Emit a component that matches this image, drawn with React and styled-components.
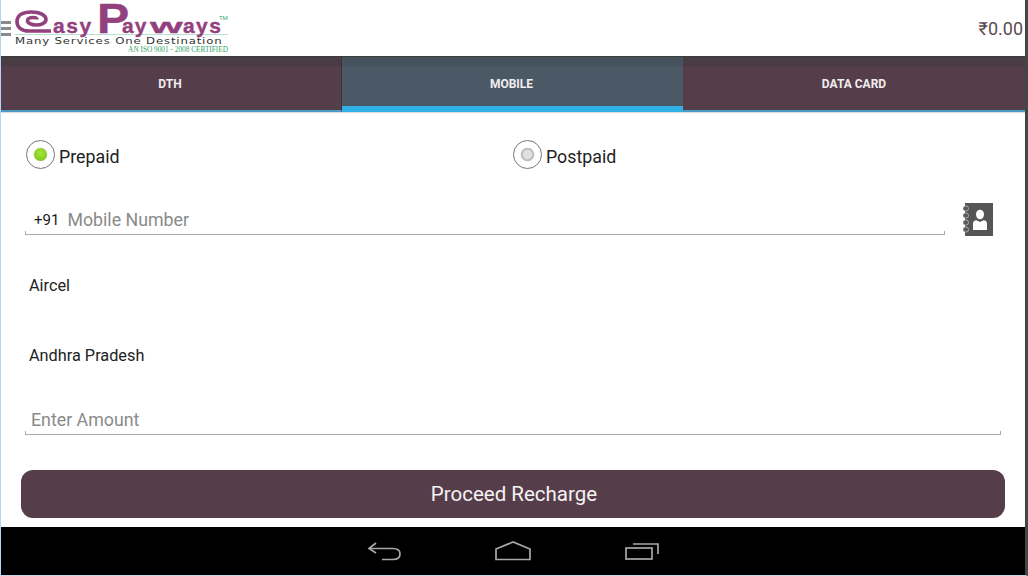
import React from "react";
import styled, { createGlobalStyle } from "styled-components";

const Global = createGlobalStyle`
  html, body { margin: 0; padding: 0; background: #fff; }
  body { font-family: Roboto, "Liberation Sans", sans-serif; }
`;

const Screen = styled.div`
  width: 1028px;
  height: 576px;
  box-sizing: border-box;
  display: flex;
  flex-direction: column;
  overflow: hidden;
  background: #fff;
  border-left: 1px solid #b5d5f3;
  border-right: 3px solid #454545;
  border-bottom: 1px solid #c4d8ea;
`;

const Header = styled.header`
  height: 56px;
  flex: none;
  display: flex;
  align-items: flex-start;
  justify-content: space-between;
  background: #fff;
`;

const Brand = styled.div`
  display: flex;
  align-items: flex-start;
`;

const Burger = styled.div`
  width: 10px;
  margin-top: 21px;
  display: flex;
  flex-direction: column;
  gap: 3px;
  flex: none;
  margin-right: 4px;
`;

const BurgerLine = styled.span`
  display: block;
  height: 3px;
  background: #8a8a8a;
`;

const Logo = styled.div`
  width: 213px;
  height: 56px;
  display: flex;
  flex-direction: column;
  flex: none;
`;

const LogoFrame = styled.div`
  position: relative;
`;

const LogoMark = styled.div`
  height: 34px;
  display: flex;
  align-items: baseline;
  color: #93407f;
  font-family: "Liberation Sans", sans-serif;
  font-weight: 700;
  white-space: nowrap;
  -webkit-text-stroke: 0.35px #93407f;
`;

const SwirlSlot = styled.div`
  align-self: flex-start;
  margin-top: 10px;
  width: 38px;
  height: 23px;
  flex: none;
`;

const LogoLetters = styled.span`
  display: inline-block;
  width: ${(p) => p.$width}px;
  flex: none;
  font-size: 21px;
  line-height: 12px;
  letter-spacing: ${(p) => p.$spacing || 0}px;
  transform: scaleX(${(p) => p.$stretch || 1});
  transform-origin: left center;
`;

const LogoBig = styled.span`
  display: inline-block;
  width: 33px;
  flex: none;
  margin-left: 4px;
  margin-right: -8px;
  margin-top: 2px;
  font-size: 42px;
  line-height: 34px;
  transform: scaleX(1.15);
  transform-origin: left center;
`;

const Trademark = styled.span`
  position: absolute;
  top: 15px;
  left: 204px;
  font-size: 6px;
  line-height: 6px;
  font-weight: 400;
  color: #3aa876;
`;

const Tagline = styled.div`
  border-top: 1px solid #b7e2cf;
  height: 11px;
  padding-top: 3px;
  box-sizing: border-box;
  display: flex;
  align-items: center;
`;

const TaglineText = styled.span`
  display: block;
  font-family: "DejaVu Sans", sans-serif;
  font-size: 8px;
  line-height: 8px;
  letter-spacing: 0.55px;
  color: #333;
  white-space: nowrap;
  transform: scaleX(1.47);
  transform-origin: left center;
`;

const Certified = styled.div`
  margin-top: 1px;
  text-align: right;
  font-family: "Liberation Serif", serif;
  font-size: 7.3px;
  line-height: 8px;
  color: #2fa468;
  white-space: nowrap;
`;

const Balance = styled.div`
  margin: 19px 2px 0 0;
  font-size: 18px;
  line-height: 20px;
  color: #5a4a52;
`;

const Tabs = styled.nav`
  height: 56px;
  flex: none;
  display: grid;
  grid-template-columns: 341px 341px 1fr;
  box-shadow: 0 1px 1px #ddd;
`;

const Tab = styled.div`
  display: flex;
  align-items: center;
  justify-content: center;
  padding: ${(p) => (p.$active ? "4px 2px 0 0" : p.$last ? "0" : "0 2px 0 0")};
  box-sizing: border-box;
  font-size: 12px;
  font-weight: 700;
  color: #f2eef0;
  background: ${(p) =>
    p.$active
      ? "linear-gradient(#46535f 0, #46535f 9px, #4b5967 10px)"
      : "linear-gradient(#4a3c43 0, #4a3c43 9px, #553d49 10px)"};
  border-top: 1px solid #3c3c3c;
  border-bottom: ${(p) => (p.$active ? "6px solid #2fb1e6" : "2px solid #4a9cc4")};
  border-right: ${(p) => (p.$last || p.$active ? "0" : "1px solid #3f3138")};
`;

const Body = styled.main`
  flex: 1;
  min-height: 0;
  display: flex;
  flex-direction: column;
  padding: 27px 20px 9px 20px;
`;

const RadioRow = styled.div`
  height: 30px;
  display: grid;
  grid-template-columns: 487px 1fr;
  padding-left: 5px;
  margin-top: 1px;
`;

const RadioOption = styled.label`
  display: flex;
  align-items: center;
  gap: 4px;
  font-size: 17.8px;
  color: #222;
`;

const RadioText = styled.span`
  margin-top: 4px;
`;

const RadioRing = styled.span`
  width: 29px;
  height: 29px;
  flex: none;
  box-sizing: border-box;
  border: 1px solid #777;
  border-radius: 50%;
  display: flex;
  align-items: center;
  justify-content: center;
  background: #fff;
`;

const RadioDot = styled.span`
  width: 13px;
  height: 13px;
  border-radius: 50%;
  background: ${(p) =>
    p.$on
      ? "radial-gradient(circle at 50% 40%, #a8e43a 0, #84cf1c 65%, #6da81c 100%)"
      : "radial-gradient(circle at 50% 50%, #dcdcdc 0, #e4e4e4 40%, #6f6f6f 100%)"};
  box-shadow: 0 0 1px #999;
`;

const PhoneRow = styled.div`
  display: flex;
  align-items: flex-end;
  margin-top: 33px;
  height: 33px;
`;

const Field = styled.div`
  width: ${(p) => p.$width}px;
  height: 33px;
  margin-left: 4px;
  flex: none;
  box-sizing: border-box;
  display: flex;
  align-items: flex-end;
  padding: 0 0 4px ${(p) => p.$pad}px;
  border-bottom: 1px solid #a9a9a9;
  position: relative;
  &::before, &::after {
    content: "";
    position: absolute;
    bottom: 0;
    width: 1px;
    height: 3px;
    background: #a9a9a9;
  }
  &::before { left: 0; }
  &::after { right: 0; }
`;

const Prefix = styled.span`
  font-size: 15px;
  line-height: 20px;
  color: #1a1a1a;
  margin-left: 1px;
  margin-right: 8px;
`;

const Placeholder = styled.span`
  font-size: 17.8px;
  line-height: 21px;
  color: #8a8a8a;
`;

const ContactButton = styled.div`
  width: 32px;
  height: 33px;
  margin-left: 17px;
  margin-bottom: -1px;
  flex: none;
`;

const SelectList = styled.div`
  margin-top: 15px;
`;

const SelectRow = styled.div`
  height: 70px;
  padding-left: 8px;
  display: flex;
  align-items: center;
  font-size: 16.3px;
  color: #222;
`;

const AmountRow = styled.div`
  margin-top: 12px;
`;

const Submit = styled.button`
  width: 984px;
  height: 48px;
  flex: none;
  margin-top: 35px;
  border: 0;
  border-radius: 12px;
  background: #553e4a;
  color: #f5f2f3;
  font-family: inherit;
  font-size: 20.5px;
  padding: 0 0 0 2px;
`;

const NavBar = styled.div`
  height: 48px;
  flex: none;
  background: #000;
  display: flex;
  align-items: center;
  justify-content: center;
  gap: 94px;
`;

const ContactIcon = () => (
  <svg width="32" height="33" viewBox="0 0 32 33">
    <rect x="3" y="0" width="28" height="33" fill="#555" />
    <g fill="#5c5c5c" stroke="#eee" strokeWidth="0.5">
      <rect x="1" y="3" width="5.5" height="5" rx="2.2" />
      <rect x="1" y="10" width="5.5" height="5" rx="2.2" />
      <rect x="1" y="17" width="5.5" height="5" rx="2.2" />
      <rect x="1" y="24" width="5.5" height="5" rx="2.2" />
    </g>
    <ellipse cx="18" cy="11.5" rx="4" ry="4.8" fill="#fff" />
    <path d="M11 27 V20.5 Q11 17.6 14.5 17.2 L18 19 L21.5 17.2 Q25 17.6 25 20.5 V27 Z" fill="#fff" />
  </svg>
);

const Swirl = () => (
  <svg width="36" height="23" viewBox="0 0 36 23" fill="none" stroke="#93407f" strokeWidth="3.6">
    <path d="M36 21 H14 C6 21 2 17 2 11.5 C2 5 8 2 16 2 C25 2 31 5 31 9.5 C31 13 26 15 21 15 C16 15 12.5 13 12.5 10.5 C12.5 8.5 15 7.5 18 7.5 C20 7.5 22 8 22 9.5" />
  </svg>
);

const BackIcon = () => (
  <svg width="34" height="20" viewBox="0 0 34 20" fill="none" stroke="#a8a8a8" strokeWidth="1.7">
    <path d="M9 2 L2 7.5 L9 12" />
    <path d="M2 7.5 H26 Q33 7.5 33 13 Q33 18.5 26 18.5 H15" />
  </svg>
);

const HomeIcon = () => (
  <svg width="36" height="20" viewBox="0 0 36 20" fill="none" stroke="#a8a8a8" strokeWidth="1.7">
    <path d="M1 8 L18 1 L35 8 V18.5 H1 Z" />
  </svg>
);

const RecentIcon = () => (
  <svg width="34" height="18" viewBox="0 0 34 18" fill="none" stroke="#a8a8a8" strokeWidth="1.7">
    <rect x="1" y="6" width="26" height="11" />
    <path d="M8 2 H33 V12" />
  </svg>
);

const LogoBlock = () => (
  <Logo>
    <LogoFrame>
      <LogoMark>
        <SwirlSlot><Swirl /></SwirlSlot>
        <LogoLetters $width={40} $spacing={1.6}>asy</LogoLetters>
        <LogoBig>P</LogoBig>
        <LogoLetters $width={28} $spacing={1}>ay</LogoLetters>
        <LogoLetters $width={33} $stretch={2}>w</LogoLetters>
        <LogoLetters $width={39} $spacing={1.4}>ays</LogoLetters>
      </LogoMark>
      <Trademark>TM</Trademark>
    </LogoFrame>
    <Tagline><TaglineText>Many Services One Destination</TaglineText></Tagline>
    <Certified>AN ISO 9001 - 2008 CERTIFIED</Certified>
  </Logo>
);

export default function App() {
  return (
    <>
      <Global />
      <Screen>
        <Header>
          <Brand>
            <Burger>
              <BurgerLine />
              <BurgerLine />
              <BurgerLine />
            </Burger>
            <LogoBlock />
          </Brand>
          <Balance>₹0.00</Balance>
        </Header>
        <Tabs>
          <Tab>DTH</Tab>
          <Tab $active>MOBILE</Tab>
          <Tab $last>DATA CARD</Tab>
        </Tabs>
        <Body>
          <RadioRow>
            <RadioOption>
              <RadioRing><RadioDot $on /></RadioRing>
              <RadioText>Prepaid</RadioText>
            </RadioOption>
            <RadioOption>
              <RadioRing><RadioDot /></RadioRing>
              <RadioText>Postpaid</RadioText>
            </RadioOption>
          </RadioRow>
          <PhoneRow>
            <Field $width={920} $pad={8}>
              <Prefix>+91</Prefix>
              <Placeholder>Mobile Number</Placeholder>
            </Field>
            <ContactButton><ContactIcon /></ContactButton>
          </PhoneRow>
          <SelectList>
            <SelectRow>Aircel</SelectRow>
            <SelectRow>Andhra Pradesh</SelectRow>
          </SelectList>
          <AmountRow>
            <Field $width={976} $pad={6}>
              <Placeholder>Enter Amount</Placeholder>
            </Field>
          </AmountRow>
          <Submit>Proceed Recharge</Submit>
        </Body>
        <NavBar>
          <BackIcon />
          <HomeIcon />
          <RecentIcon />
        </NavBar>
      </Screen>
    </>
  );
}
